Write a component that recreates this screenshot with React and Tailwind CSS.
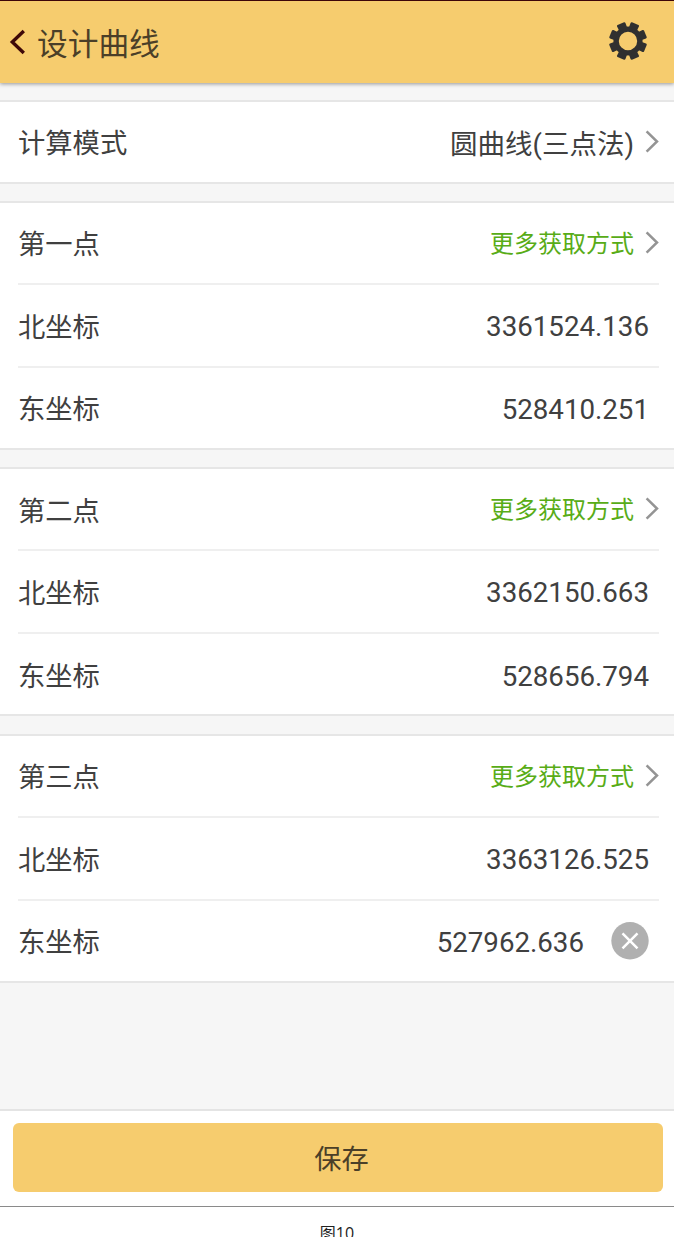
import React from "react";

const points = [
  { title: "第一点", north: "3361524.136", east: "528410.251" },
  { title: "第二点", north: "3362150.663", east: "528656.794" },
  { title: "第三点", north: "3363126.525", east: "527962.636", clearable: true },
];

const toothAngles = [22.5, 67.5, 112.5, 157.5, 202.5, 247.5, 292.5, 337.5];

const rowSizes = {
  first: "h-[82px] border-b-2 border-[#efefef]",
  middle: "h-[83px] border-b-2 border-[#efefef]",
  last: "h-[80px]",
};

function Gear() {
  return (
    <svg className="mb-[2px]" width="40" height="40" viewBox="-20 -20 40 40" fill="#303030">
      <circle r="11.9" fill="none" stroke="#303030" strokeWidth="5.4" />
      {toothAngles.map((a) => (
        <path
          key={a}
          d="M-4.3 -12.5 L-4.5 -17.6 Q-4.5 -18.7 -3.5 -18.8 L3.5 -18.8 Q4.5 -18.7 4.5 -17.6 L4.3 -12.5 Z"
          transform={`rotate(${a})`}
        />
      ))}
    </svg>
  );
}

function Chevron() {
  return (
    <svg width="14" height="24" viewBox="0 0 14 24" fill="none" stroke="#949494" strokeWidth="2.5">
      <path d="M1.6 1.3 L12 11.5 L1.6 21.7" />
    </svg>
  );
}

function Row({ label, size, children }) {
  return (
    <div className={"ml-[18px] mr-[15px] flex items-center justify-between " + rowSizes[size]}>
      <span className="pt-[6px] text-[27.3px] leading-none">{label}</span>
      {children}
    </div>
  );
}

function PointSection({ point }) {
  return (
    <section className="h-[249px] shrink-0 border-y-2 border-[#e6e6e6] bg-white">
      <Row label={point.title} size="first">
        <button className="flex items-center gap-[11px] text-[24px] leading-none text-[#58ac17]">
          <span className="pt-[2px]">更多获取方式</span>
          <Chevron />
        </button>
      </Row>
      <Row label="北坐标" size="middle">
        <span className="mr-[10px] pt-[2.5px] text-[27.7px] leading-none">{point.north}</span>
      </Row>
      <Row label="东坐标" size="last">
        <span className="mr-[10px] flex items-center gap-[27px] text-[27.7px] leading-none">
          <span className="pt-[4px]">{point.east}</span>
          {point.clearable && (
            <svg width="38" height="38" viewBox="0 0 38 38">
              <circle cx="19" cy="18.8" r="18.7" fill="#b0b0b0" />
              <path d="M11.5 11.3 L26.5 26.3 M26.5 11.3 L11.5 26.3" stroke="#fff" strokeWidth="2.5" />
            </svg>
          )}
        </span>
      </Row>
    </section>
  );
}

export default function App() {
  return (
    <div className="flex h-[1237px] w-[674px] flex-col overflow-hidden bg-white font-[Roboto,'Noto_Sans_CJK_SC',sans-serif] text-[#404040]">
      <div className="flex h-[1207px] shrink-0 flex-col border-b border-[#8a8a8a] bg-[#f6f6f6]">
        <header className="relative flex h-[83px] shrink-0 items-center border-t border-[#3d0508] bg-[#f6cc6e] pl-[9px] pr-[26px] shadow-[0_1px_4px_rgba(0,0,0,0.4)]">
          <svg width="16" height="26" viewBox="0 0 16 26" fill="none" stroke="#3e0808" strokeWidth="3.4">
            <path d="M14.8 2 L3.3 13 L14.8 24" />
          </svg>
          <h1 className="ml-[12px] grow pt-[6px] text-[30.7px] leading-none text-[#4b3f28]">设计曲线</h1>
          <Gear />
        </header>

        <section className="mt-[17px] h-[84px] shrink-0 border-y-2 border-[#e6e6e6] bg-white">
          <Row label="计算模式" size="last">
            <button className="flex items-center gap-[11px] text-[27.5px] leading-none">
              <span className="pt-[6px]">圆曲线(三点法)</span>
              <Chevron />
            </button>
          </Row>
        </section>

        <main className="mt-[17px] flex flex-col gap-[17.4px]">
          {points.map((p) => (
            <PointSection key={p.title} point={p} />
          ))}
        </main>

        <footer className="mt-auto h-[97px] shrink-0 border-t-2 border-[#e4e4e4] bg-white pl-[13px] pr-[11px] pt-[12px]">
          <button className="flex h-[69px] w-full items-center justify-center rounded-[6px] bg-[#f6cc6e] pl-[7px] pt-[7px] text-[27.2px] leading-none text-[#4b3f28]">
            保存
          </button>
        </footer>
      </div>
      <p className="pt-[16px] text-center font-['Open_Sans','Noto_Sans_CJK_SC',sans-serif] text-[16px] leading-[20px] text-[#222]">
        图10
      </p>
    </div>
  );
}
